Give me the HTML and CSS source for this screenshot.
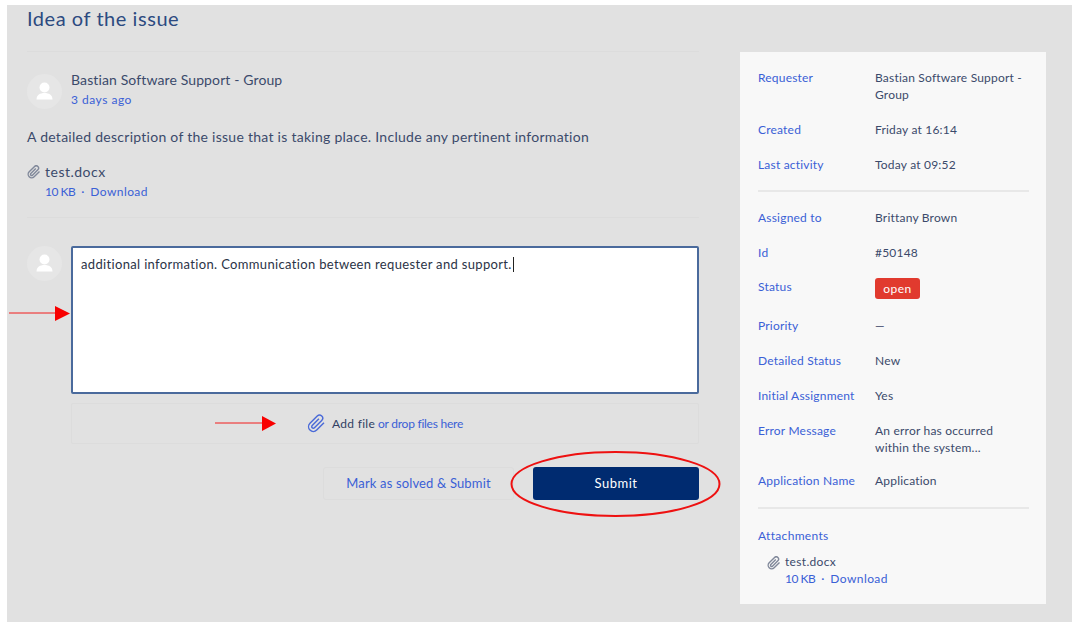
FILE: index.html
```html
<!DOCTYPE html>
<html lang="en">
<head>
<meta charset="utf-8">
<title>Idea of the issue</title>
<link rel="stylesheet" href="styles.css">
</head>
<body>
<svg class="defs" width="0" height="0" aria-hidden="true">
  <symbol id="clip" viewBox="0 0 24 24"><path d="M21.44 11.05l-9.19 9.19a6 6 0 0 1-8.49-8.49l9.19-9.19a4 4 0 0 1 5.66 5.66l-9.2 9.19a2 2 0 0 1-2.83-2.83l8.49-8.48"/></symbol>
  <symbol id="person" viewBox="0 0 35 35"><circle cx="17.5" cy="13.5" r="5"/><path d="M9.500 25.500c0-4.500 3.500-6.500 8-6.500s8 2 8 6.500z"/></symbol>
</svg>
<div class="panel">
  <main class="main">
    <h1 class="title">Idea of the issue</h1>
    <section class="comment">
      <svg class="avatar"><use href="#person"/></svg>
      <div class="meta">
        <div class="name">Bastian Software Support - Group</div>
        <div class="date">3 days ago</div>
      </div>
    </section>
    <p class="desc">A detailed description of the issue that is taking place. Include any pertinent information</p>
    <div class="attach">
      <svg class="clip"><use href="#clip"/></svg>
      <div>
        <div class="fname">test.docx</div>
        <div class="fmeta"><span class="size">10 KB</span><span class="sep">·</span><span class="dl">Download</span></div>
      </div>
    </div>
    <section class="reply">
      <svg class="avatar"><use href="#person"/></svg>
      <div class="reply-body">
        <div class="editor">additional information. Communication between requester and support.<span class="caret"></span></div>
        <div class="drop">
          <svg class="clip-blue"><use href="#clip"/></svg>
          <span class="add">Add file</span>
          <span class="or">or drop files here</span>
        </div>
        <div class="actions">
          <button class="btn-ghost" type="button">Mark as solved &amp; Submit</button>
          <button class="btn-main" type="button">Submit</button>
        </div>
      </div>
    </section>
  </main>
  <aside class="side">
    <dl class="rows">
      <div class="row"><dt>Requester</dt><dd>Bastian Software Support - Group</dd></div>
      <div class="row"><dt>Created</dt><dd>Friday at 16:14</dd></div>
      <div class="row"><dt>Last activity</dt><dd>Today at 09:52</dd></div>
    </dl>
    <hr class="rule">
    <dl class="rows">
      <div class="row"><dt>Assigned to</dt><dd>Brittany Brown</dd></div>
      <div class="row"><dt>Id</dt><dd>#50148</dd></div>
      <div class="row row-status"><dt>Status</dt><dd><span class="badge">open</span></dd></div>
      <div class="row"><dt>Priority</dt><dd>—</dd></div>
      <div class="row"><dt>Detailed Status</dt><dd>New</dd></div>
      <div class="row"><dt>Initial Assignment</dt><dd>Yes</dd></div>
      <div class="row row-error"><dt>Error Message</dt><dd>An error has occurred within the system...</dd></div>
      <div class="row row-app"><dt>Application Name</dt><dd>Application</dd></div>
    </dl>
    <hr class="rule">
    <div class="side-label">Attachments</div>
    <div class="side-attach">
      <svg class="clip"><use href="#clip"/></svg>
      <div>
        <div class="side-fname">test.docx</div>
        <div class="side-fmeta"><span class="size">10 KB</span><span class="sep">·</span><span class="dl">Download</span></div>
      </div>
    </div>
  </aside>
</div>
<svg class="marks" width="1077" height="628" aria-hidden="true">
  <path class="mark-line" d="M9 313H56"/>
  <path class="mark-head" d="M55 306L70 313.500L55 321z"/>
  <path class="mark-line" d="M215 423H263"/>
  <path class="mark-head" d="M262 416L276 423.500L262 431z"/>
  <ellipse class="mark-ring" cx="615.500" cy="484" rx="104" ry="32"/>
</svg>
</body>
</html>
```
FILE: styles.css
```css
* { box-sizing: border-box; }
html, body { margin: 0; height: 628px; overflow: hidden; background: #fff; }
body {
  position: relative;
  padding: 5px 5px 6px 7px;
  font-family: "Lato", "Liberation Sans", sans-serif;
  color: #3b4a6b;
}
.defs { position: absolute; }
.panel {
  display: flex;
  height: 617px;
  padding-left: 20px;
  background: #e1e1e1;
}
.main { width: 672px; flex: none; }
.title {
  margin: 0;
  height: 47px;
  border-bottom: 1px solid #dcdcdc;
  font-size: 20px;
  line-height: 27px;
  font-weight: 400;
  color: #2c4a80;
  letter-spacing: .55px;
}
.comment { display: flex; gap: 9px; margin-top: 22px; }
.avatar { width: 35px; height: 35px; flex: none; border-radius: 50%; background: #e6e6e6; fill: #fff; }
.meta { margin-top: -4px; }
.name { font-size: 14px; line-height: 20px; letter-spacing: .12px; }
.date { font-size: 12px; line-height: 20px; color: #3a60d6; letter-spacing: .5px; }
.desc { margin: 17px 0 0; font-size: 14px; line-height: 20px; letter-spacing: .27px; }
.attach { display: flex; gap: 4px; margin-top: 15px; padding-bottom: 16px; border-bottom: 1px solid #dcdcdc; }
.clip { width: 14px; height: 14px; margin-top: 3px; flex: none; fill: none; stroke: #80889a; stroke-width: 2.4; }
.fname { font-size: 14px; line-height: 20px; letter-spacing: .5px; }
.fmeta { font-size: 12px; line-height: 19px; color: #3a60d6; }
.size { letter-spacing: -.5px; }
.sep { margin: 0 6px; }
.dl { letter-spacing: .42px; }
.reply { display: flex; gap: 9px; margin-top: 28px; }
.reply-body { flex: 1; }
.editor {
  height: 148px;
  padding: 7px 8px;
  background: #fff;
  border: 2px solid #4a6a9c;
  border-radius: 2px;
  font-size: 13px;
  line-height: 18px;
  color: #2b3346;
  letter-spacing: .34px;
}
.caret { display: inline-block; width: 1px; height: 15px; margin-left: 1px; vertical-align: -3px; background: #222; }
.drop {
  display: flex;
  align-items: center;
  justify-content: center;
  height: 41px;
  margin-top: 9px;
  border: 1px solid #dcdcdc;
  border-radius: 2px;
  font-size: 12px;
}
.clip-blue { width: 19px; height: 19px; margin-right: 6px; fill: none; stroke: #4a6ad8; stroke-width: 1.8; }
.add { color: #303f63; letter-spacing: .28px; }
.or { margin-left: 3px; color: #3a60d6; letter-spacing: -.25px; }
.actions { display: flex; justify-content: flex-end; gap: 19px; margin-top: 23px; }
.btn-ghost, .btn-main {
  height: 33px;
  padding: 0 0 2px;
  border-radius: 3px;
  font-family: inherit;
  font-size: 13px;
}
.btn-ghost { width: 191px; background: transparent; border: 1px solid #dcdcdc; color: #3a60d6; letter-spacing: .15px; }
.btn-main { width: 166px; background: #002b70; border: 0; color: #fff; letter-spacing: .5px; }
.side {
  width: 306px;
  height: 552px;
  flex: none;
  margin: 47px 0 0 41px;
  padding: 17px 17px 0 18px;
  background: #f8f8f8;
  font-size: 12px;
  line-height: 17px;
}
.rows { display: flex; flex-direction: column; gap: 18px; margin: 0; }
.row { display: grid; grid-template-columns: 117px 1fr; }
.row dt { color: #3a60d6; letter-spacing: .2px; }
.row dd { margin: 0; letter-spacing: .2px; }
.row-status { margin-top: -1px; }
.row-error { margin-bottom: -2px; }
.row-error dd { max-width: 130px; }
.row-app { margin-bottom: 1px; }
.badge {
  display: inline-block;
  width: 45px;
  height: 21px;
  background: #e13a2e;
  border-radius: 3px;
  color: #fff;
  font-size: 12px;
  line-height: 22px;
  text-align: center;
  letter-spacing: .5px;
}
.rule { height: 2px; margin: 17px 0; background: #e8e8e8; border: 0; }
.side-label { margin-top: 18px; color: #3a60d6; letter-spacing: .32px; }
.side-attach { display: flex; gap: 4px; margin: 9px 0 0 9px; }
.side-fname { letter-spacing: .32px; }
.side-fmeta { color: #3a60d6; }
.marks { position: absolute; left: 0; top: 0; pointer-events: none; }
.mark-line { fill: none; stroke: #f21c1c; stroke-width: 1; }
.mark-head { fill: #f80000; }
.mark-ring { fill: none; stroke: #ee1111; stroke-width: 2; }
```
